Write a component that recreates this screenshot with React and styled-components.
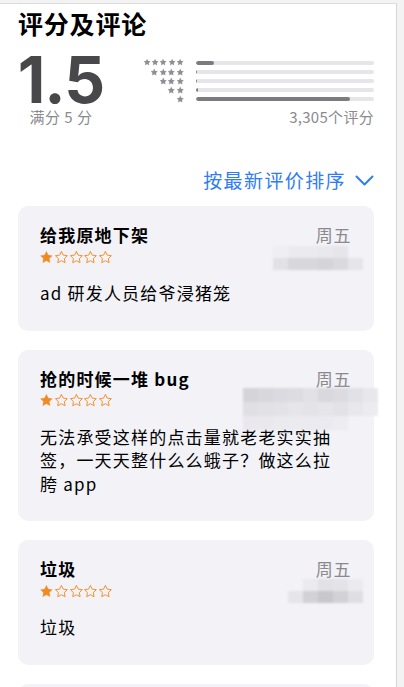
import React from "react";
import styled, { createGlobalStyle } from "styled-components";

const GlobalStyle = createGlobalStyle`
  html, body {
    margin: 0;
    padding: 0;
    background: #f3f3f3;
  }
  body {
    font-family: "Noto Sans CJK SC", "Noto Sans", sans-serif;
    -webkit-font-smoothing: antialiased;
  }
`;

const Page = styled.div`
  margin-top: 3px;
  width: 397px;
  min-height: 684px;
  background: #fff;
  border-top: 1px solid #dcdcdc;
  border-right: 1px solid #d6d6d6;
  padding: 4px 22px 0 18px;
  box-sizing: border-box;
  overflow: hidden;
`;

const Title = styled.h1`
  margin: 0;
  font-size: 25px;
  line-height: 30px;
  font-weight: 700;
  letter-spacing: 0.8px;
  color: #000;
`;

const Summary = styled.div`
  display: flex;
  align-items: flex-start;
  margin-top: 9px;
`;

const ScoreBlock = styled.div`
  width: 86px;
  margin-top: 2px;
  display: flex;
  flex-direction: column;
  align-items: center;
`;

const Score = styled.div`
  font-family: Inter, "Liberation Sans", sans-serif;
  font-weight: 700;
  font-size: 64px;
  line-height: 62px;
  letter-spacing: -1px;
  color: #48484a;
`;

const OutOf = styled.div`
  margin-top: -4px;
  font-size: 15px;
  line-height: 20px;
  color: #8a8a8e;
  letter-spacing: 0.5px;
`;

const Histogram = styled.div`
  flex: 1;
  margin-left: 39px;
  padding-top: 11px;
  display: flex;
  flex-direction: column;
`;

const HistRow = styled.div`
  display: flex;
  align-items: center;
  height: 9.2px;
`;

const HistStars = styled.div`
  width: 41px;
  display: flex;
  justify-content: flex-end;
`;

const Track = styled.div`
  flex: 1;
  margin-left: 12px;
  height: 4px;
  border-radius: 2px;
  background: #e5e5ea;
  overflow: hidden;
`;

const Fill = styled.div`
  height: 100%;
  background: #7c7c80;
  border-radius: 2px;
`;

const Count = styled.div`
  align-self: flex-end;
  margin-top: 3px;
  font-size: 15px;
  line-height: 20px;
  color: #8a8a8e;
  letter-spacing: 0.3px;
`;

const SortRow = styled.div`
  display: flex;
  justify-content: flex-end;
  align-items: center;
  margin-top: 40px;
  color: #2f7cf6;
  font-size: 19px;
  line-height: 26px;
  letter-spacing: 1.4px;
  gap: 9px;
`;

const CardList = styled.div`
  display: flex;
  flex-direction: column;
  gap: 19px;
  margin-top: 13px;
`;

const Card = styled.div`
  position: relative;
  background: #f2f2f7;
  border-radius: 10px;
  padding: 17px 23px 26px 22px;
`;

const CardHead = styled.div`
  display: flex;
  justify-content: space-between;
  align-items: baseline;
`;

const CardTitle = styled.div`
  font-size: 17px;
  line-height: 24px;
  font-weight: 700;
  letter-spacing: 1.2px;
  color: #000;
`;

const CardDate = styled.div`
  font-size: 17px;
  line-height: 24px;
  color: #8a8a8e;
  letter-spacing: 0.6px;
`;

const CardStars = styled.div`
  display: flex;
  margin-top: 3px;
  margin-left: -1px;
  height: 14px;
  align-items: center;
`;

const Body = styled.div`
  margin-top: 17px;
  width: 300px;
  font-size: 17px;
  line-height: 23.5px;
  letter-spacing: 1.2px;
  color: #000;
`;

const Mosaic = styled.div`
  position: absolute;
  left: ${(p) => p.$left}px;
  top: ${(p) => p.$top}px;
  display: grid;
  grid-template-columns: repeat(${(p) => p.$cols}, 15px);
  grid-auto-rows: ${(p) => p.$row}px;
  filter: blur(0.8px);
`;

const Cell = styled.div`
  background: ${(p) => p.$c || "transparent"};
`;

const STAR =
  "M12 2.2l2.95 6.1 6.7.95-4.85 4.7 1.15 6.65L12 17.45 6.05 20.6 7.2 13.95 2.35 9.25l6.7-.95L12 2.2z";

const Star = ({ size, filled, color }) => (
  <svg width={size} height={size} viewBox="0 0 24 24">
    <path
      d={STAR}
      fill={filled ? color : "none"}
      stroke={color}
      strokeWidth={filled ? 0.4 : 1.5}
      strokeLinejoin="round"
    />
  </svg>
);

const Chevron = () => (
  <svg width="19" height="11" viewBox="0 0 19 11">
    <path
      d="M1.5 1.5l8 8 8-8"
      fill="none"
      stroke="#2f7cf6"
      strokeWidth="2"
      strokeLinecap="round"
      strokeLinejoin="round"
    />
  </svg>
);

const bars = [
  { stars: 5, pct: 10 },
  { stars: 4, pct: 0.6 },
  { stars: 3, pct: 0.6 },
  { stars: 2, pct: 0.9 },
  { stars: 1, pct: 86.5 },
];

const reviews = [
  {
    title: "给我原地下架",
    body: "ad 研发人员给爷浸猪笼",
    mosaic: {
      left: 255,
      top: 40,
      cols: 6,
      row: 12,
      cells: [
        "#efeef3", "#ebeaef", "#ebeaef", "#e9e8ed", "#e6e5ea", null,
        "#e2e1e6", "#d8d7dc", "#d8d7dc", "#d5d4d9", "#dad9de", "#e6e5ea",
      ],
    },
  },
  {
    title: "抢的时候一堆 bug",
    body: "无法承受这样的点击量就老老实实抽签，一天天整什么么蛾子？做这么拉胯 app",
    mosaic: {
      left: 225,
      top: 38,
      cols: 9,
      row: 14,
      cells: [
        "#d5d4d9", "#d8d7dc", "#dbdae0", "#dddce1", "#e2e1e6", "#d9d8dd", "#dcdbe0", "#e2e1e6", "#e8e7ec",
        "#e0dfe4", "#e2e1e6", "#e3e2e7", "#e6e5ea", "#e4e3e8", "#e6e5ea", "#e3e2e7", "#e8e7ec", "#ecebf0",
        "#e9e8ed", "#e9e8ed", "#eaeaef", "#ebeaef", "#eaeaef", "#ebeaef", "#edecf1", null, null,
      ],
    },
  },
  {
    title: "垃圾",
    body: "垃圾",
    mosaic: {
      left: 270,
      top: 39,
      cols: 5,
      row: 12,
      cells: [
        null, "#eaeaef", "#e2e1e6", "#e4e3e8", "#ebeaef",
        "#e6e5ea", "#d2d1d6", "#c8c7cc", "#d2d1d6", "#dfdee3",
      ],
    },
  },
  { title: "", body: "", mosaic: null },
];

const Review = ({ title, body, mosaic }) => (
  <Card>
    <CardHead>
      <CardTitle>{title}</CardTitle>
      <CardDate>周五</CardDate>
    </CardHead>
    <CardStars>
      {[0, 1, 2, 3, 4].map((i) => (
        <Star key={i} size={14.8} filled={i === 0} color="#f28a24" />
      ))}
    </CardStars>
    <Body>{body}</Body>
    {mosaic && (
      <Mosaic
        $left={mosaic.left}
        $top={mosaic.top}
        $cols={mosaic.cols}
        $row={mosaic.row}
      >
        {mosaic.cells.map((c, i) => (
          <Cell key={i} $c={c} />
        ))}
      </Mosaic>
    )}
  </Card>
);

export default function App() {
  return (
    <>
      <GlobalStyle />
      <Page>
        <Title>评分及评论</Title>
        <Summary>
          <ScoreBlock>
            <Score>1.5</Score>
            <OutOf>满分 5 分</OutOf>
          </ScoreBlock>
          <Histogram>
            {bars.map((b) => (
              <HistRow key={b.stars}>
                <HistStars>
                  {Array.from({ length: b.stars }).map((_, i) => (
                    <Star key={i} size={8.5} filled color="#8e8e93" />
                  ))}
                </HistStars>
                <Track>
                  <Fill style={{ width: `${b.pct}%` }} />
                </Track>
              </HistRow>
            ))}
            <Count>3,305个评分</Count>
          </Histogram>
        </Summary>
        <SortRow>
          <span>按最新评价排序</span>
          <Chevron />
        </SortRow>
        <CardList>
          {reviews.map((r, i) => (
            <Review key={i} {...r} />
          ))}
        </CardList>
      </Page>
    </>
  );
}
